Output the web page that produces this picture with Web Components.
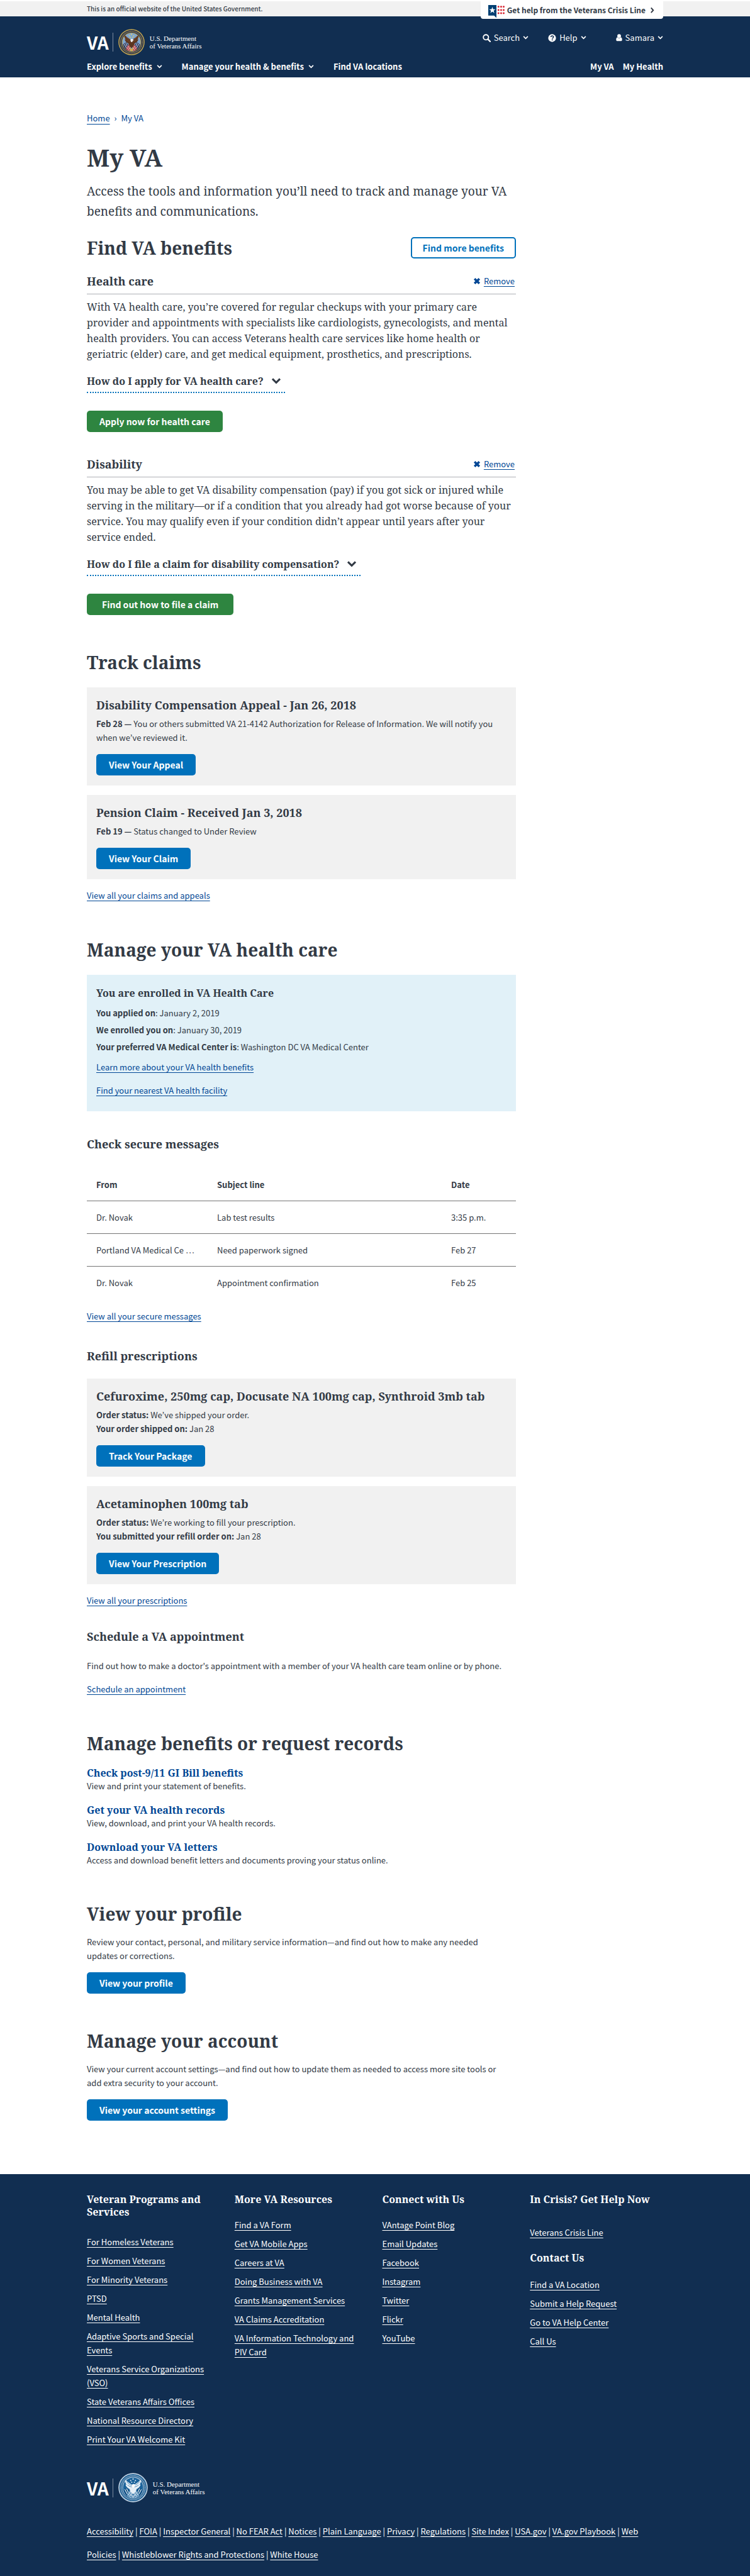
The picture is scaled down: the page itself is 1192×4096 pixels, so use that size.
<!DOCTYPE html>
<html lang="en">
<head>
<meta charset="utf-8">
<meta name="viewport" content="width=device-width, initial-scale=1">
<title>My VA</title>
<style>
  :root {
    --sans: "Noto Sans CJK JP", "Noto Sans", sans-serif;
    --serif: "Noto Serif", "DejaVu Serif Condensed", "DejaVu Serif", serif;
    --ink: #323a45;
    --link: #004795;
    --navy: #112e51;
    --blue: #0071bb;
    --green: #2e8540;
    --grey: #f1f1f1;
    --measure: 916px;
  }
  body {
    margin: 0;
    background: #fff;
    color: var(--ink);
    font: 400 13px/22px var(--sans);
  }
</style>
</head>
<body>
<my-va-page></my-va-page>

<script>
const define = (name, html, setup) => {
  const template = document.createElement('template');
  template.innerHTML = html;
  customElements.define(name, class extends HTMLElement {
    constructor() {
      super();
      this.attachShadow({ mode: 'open' }).append(template.content.cloneNode(true));
    }
    connectedCallback() {
      if (setup) setup(this, this.shadowRoot);
    }
  });
};

/* ---------- icons ---------- */
const ICONS = {
  chevron: ['0 0 12 10', '<path d="M1.500 2.500 6 7l4.500-4.500" fill="none" stroke="currentColor" stroke-width="2.300"/>'],
  caret: ['0 0 8 12', '<path d="M2 1.500 6 6 2 10.500" fill="none" stroke="currentColor" stroke-width="2.200"/>'],
  search: ['0 0 14 14', '<circle cx="5.700" cy="5.700" r="4.400" fill="none" stroke="currentColor" stroke-width="2"/><path d="m9 9 4 4" stroke="currentColor" stroke-width="2.400" stroke-linecap="round"/>'],
  help: ['0 0 14 14', '<circle cx="7" cy="7" r="6.600" fill="currentColor"/><path d="M4.900 5.300C5 3.900 6 3.300 7.100 3.300c1.200 0 2.200.7 2.200 1.900 0 1.500-2 1.600-2 3" fill="none" stroke="#112e51" stroke-width="1.700"/><path d="M6.300 9.300h1.900v1.700H6.300z" fill="#112e51"/>'],
  person: ['0 0 12 14', '<circle cx="6" cy="3.800" r="3.500" fill="currentColor"/><path d="M2.700 6.400C1 6.800.3 8.700.3 11c0 1.500 1 2.500 2.300 2.500h6.800c1.300 0 2.300-1 2.300-2.500 0-2.300-.7-4.200-2.400-4.600a4.700 4.700 0 0 1-6.600 0z" fill="currentColor"/>'],
  cross: ['0 0 12 12', '<path d="m2.200 2.200 7.600 7.600M9.800 2.200 2.200 9.800" stroke="currentColor" stroke-width="3.600"/>'],
  crisis: ['0 0 28 22', '<path d="M0 0h14v22l-4-4H0z" fill="#003f72"/><path d="m7 3.200 1.400 4h4.100L9.200 9.700l1.200 4L7 11.300l-3.400 2.400 1.200-4L1.500 7.200h4.100z" fill="#fff"/><g fill="#d8232f"><circle cx="17.500" cy="3" r="1.600"/><circle cx="22" cy="3" r="1.600"/><circle cx="26.400" cy="3" r="1.600"/><circle cx="17.500" cy="8.500" r="1.600"/><circle cx="22" cy="8.500" r="1.600"/><circle cx="26.400" cy="8.500" r="1.600"/><circle cx="17.500" cy="14" r="1.600"/><circle cx="22" cy="14" r="1.600"/><circle cx="26.400" cy="14" r="1.600"/></g>']
};
define('va-icon', `
  <style>
    :host { display: inline-flex; flex: none; width: var(--size, 12px); }
    svg { display: block; width: 100%; height: auto; }
  </style>
  <svg aria-hidden="true"></svg>`,
  (host, root) => {
    const [box, shapes] = ICONS[host.getAttribute('name')];
    const svg = root.querySelector('svg');
    svg.setAttribute('viewBox', box);
    svg.innerHTML = shapes;
  });

/* ---------- department seal ---------- */
const sealSvg = c => `
  <svg viewBox="0 0 100 100" role="img" aria-label="Department of Veterans Affairs seal">
    <circle cx="50" cy="50" r="49.500" fill="${c.rope}"/>
    <circle cx="50" cy="50" r="46" fill="${c.ring}"/>
    <circle cx="50" cy="50" r="40.500" fill="none" stroke="${c.letter}" stroke-width="5.500" stroke-dasharray="2.600 1.900" opacity=".75"/>
    <circle cx="50" cy="50" r="36" fill="${c.rope}"/>
    <circle cx="50" cy="50" r="34" fill="${c.sky}"/>
    <path d="M18 58 30 50l12 18-6 14C27 79 20 70 18 58z" fill="${c.canton}"/>
    <path d="M82 58 70 50 58 68l6 14c9-3 16-12 18-24z" fill="${c.canton}"/>
    <path d="m22 56 12 22M28 53l12 26M78 56 66 78M72 53 60 79" stroke="${c.white}" stroke-width="2.200"/>
    <path d="m30 72 10-14 6 12-2 13c-6 0-10-2-14-5zM70 72 60 58l-6 12 2 13c6 0 10-2 14-5z" fill="${c.stripe}"/>
    <path d="m33 76 9-14M38 80l7-12M67 76l-9-14M62 80l-7-12" stroke="${c.white}" stroke-width="2"/>
    <g fill="${c.star}"><circle cx="42" cy="26" r="2.200"/><circle cx="50" cy="21" r="2.400"/><circle cx="58" cy="26" r="2.200"/><circle cx="45.500" cy="32" r="2"/><circle cx="54.500" cy="32" r="2"/></g>
    <path d="M50 44c-5-6-10-7-16-12-4-3-8-7-11-8 0 8 2 12 5 16-2 0-3 0-4-1 2 8 8 13 14 16l4 10 8 8 8-8 4-10c6-3 12-8 14-16-1 1-2 1-4 1 3-4 5-8 5-16-3 1-7 5-11 8-6 5-11 6-16 12z" fill="${c.eagle}"/>
    <path d="M28 30c6 7 12 10 18 14M72 30c-6 7-12 10-18 14M31 41c5 4 9 5 14 7M69 41c-5 4-9 5-14 7" fill="none" stroke="${c.feather}" stroke-width="1.600"/>
    <path d="M46 42c0-5 8-6 10-2l3 3-4 1c0 3-2 5-4 6-3-1-5-4-5-8z" fill="${c.white}"/>
    <path d="m44 68 6 10 6-10 1 10-7 7-7-7z" fill="${c.gold}"/>
  </svg>`;
define('va-seal', `<style>:host { display: block; flex: none; width: var(--seal, 42px); } svg { display: block; width: 100%; height: auto; }</style><div></div>`,
  (host, root) => {
    root.querySelector('div').innerHTML = sealSvg(host.hasAttribute('mono')
      ? { rope:'#c3d4e4', ring:'#12568c', letter:'#c3d4e4', sky:'#1b639b', canton:'#0f4f84', white:'#fff', stripe:'#5d93bd', star:'#d6e4ef', eagle:'#e6eff6', feather:'#2a6ea3', gold:'#a9c5dc' }
      : { rope:'#c9a94e', ring:'#1c2b50', letter:'#c9a94e', sky:'#7fa6cf', canton:'#27375f', white:'#eef1f5', stripe:'#b5414b', star:'#e3cf67', eagle:'#5d3620', feather:'#8a5c35', gold:'#d9a93f' });
  });

define('va-logo', `
  <style>
    :host { display: flex; align-items: center; color: #fff; }
    a { display: flex; align-items: center; color: inherit; text-decoration: none; }
    .va { font: 700 28px/32px var(--sans); }
    .rule { width: 1px; height: 30px; margin: 0 8px 0 6px; background: #7d8ba0; }
    .name { margin-left: 8px; font: 400 11px/12px "Liberation Serif", serif; }
  </style>
  <a href="#"><span class="va">VA</span><span class="rule"></span><slot></slot><span class="name">U.S. Department<br>of Veterans Affairs</span></a>`);

/* ---------- basic controls ---------- */
define('va-link', `
  <style>
    :host { display: block; }
    a { color: var(--link); text-decoration: underline; text-underline-offset: 3px; text-decoration-skip-ink: none; }
  </style>
  <a href="#"><slot></slot></a>`);

define('va-button', `
  <style>
    :host { display: block; }
    button {
      display: block; height: 34px; padding: 0 var(--pad, 20px); margin: 0;
      border: 0; border-radius: 5px; background: var(--blue); color: #fff;
      font: 700 14px/20px var(--sans); cursor: pointer;
    }
    :host([kind="go"]) button { background: var(--green); }
    :host([kind="outline"]) button { background: #fff; color: var(--blue); border: 2px solid; padding: 0 17px; }
    :host([wide]) button { --pad: 24px; }
  </style>
  <button type="button"><slot></slot></button>`);

/* ---------- header ---------- */
define('va-banner', `
  <style>
    :host { display: block; padding-top: 2px; background: #fff; }
    .bar { background: var(--grey); }
    .in { display: flex; justify-content: space-between; align-items: flex-start; height: 24px; max-width: var(--measure); margin: 0 auto; }
    .note { font-size: 10px; line-height: 24px; font-weight: 500; }
    .crisis {
      position: relative; display: flex; align-items: center; gap: 4px; height: 28px; padding: 0 14px 0 12px;
      background: #fff; border-radius: 0 0 4px 4px; color: var(--ink);
      font-size: 12px; font-weight: 700; text-decoration: none;
    }
    .crisis va-icon:first-child { --size: 26px; padding-top: 4px; }
    .crisis va-icon:last-child { --size: 7px; margin-left: 3px; }
  </style>
  <div class="bar"><div class="in">
    <span class="note">This is an official website of the United States Government.</span>
    <a class="crisis" href="#"><va-icon name="crisis"></va-icon>Get help from the Veterans Crisis Line<va-icon name="caret"></va-icon></a>
  </div></div>`);

define('va-header', `
  <style>
    :host { display: block; background: var(--navy); color: #fff; }
    .in { max-width: var(--measure); margin: 0 auto; padding: 20px 0 7px; }
    .top, .nav, .tools, .side, .main { display: flex; }
    .top { justify-content: space-between; align-items: flex-start; height: 42px; }
    .tools { gap: 31px; padding-top: 4px; }
    .nav { justify-content: space-between; margin-top: 8px; }
    .main { gap: 31px; }
    .side { gap: 14px; }
    button, .nav a {
      display: flex; align-items: center; gap: 5px; padding: 0; border: 0; background: none; color: inherit;
      font: 400 13px/20px var(--sans); text-decoration: none; cursor: pointer;
    }
    button va-icon:last-child { --size: 9px; }
    .nav button, .nav a { gap: 7px; font-weight: 700; }
    .user { margin-left: 16px; }
    .glyph { --size: 13px; }
    .user .glyph { --size: 10px; }
  </style>
  <header class="in">
    <div class="top">
      <va-logo><va-seal></va-seal></va-logo>
      <div class="tools">
        <button type="button"><va-icon class="glyph" name="search"></va-icon>Search<va-icon name="chevron"></va-icon></button>
        <button type="button"><va-icon class="glyph" name="help"></va-icon>Help<va-icon name="chevron"></va-icon></button>
        <button type="button" class="user"><va-icon class="glyph" name="person"></va-icon>Samara<va-icon name="chevron"></va-icon></button>
      </div>
    </div>
    <nav class="nav">
      <div class="main">
        <button type="button">Explore benefits<va-icon name="chevron"></va-icon></button>
        <button type="button">Manage your health &amp; benefits<va-icon name="chevron"></va-icon></button>
        <a href="#">Find VA locations</a>
      </div>
      <div class="side"><a href="#">My VA</a><a href="#">My Health</a></div>
    </nav>
  </header>`);

define('va-breadcrumb', `
  <style>
    :host { display: flex; gap: 7px; color: var(--link); }
    a { color: inherit; text-underline-offset: 4px; }
  </style>
  <a href="#">Home</a><span aria-hidden="true">›</span><span>My VA</span>`);

/* ---------- content blocks ---------- */
define('va-section', `
  <style>
    :host { display: block; margin-top: 59px; }
    .head { display: flex; justify-content: space-between; align-items: center; }
    h2 { margin: 0; font: 700 28px/32px var(--serif); }
    .body { margin-top: var(--lead, 24px); }
  </style>
  <section>
    <div class="head"><h2></h2><slot name="action"></slot></div>
    <div class="body"><slot></slot></div>
  </section>`,
  (host, root) => { root.querySelector('h2').textContent = host.getAttribute('heading'); });

define('va-subsection', `
  <style>
    :host { display: block; margin-top: 40px; }
    h3 { margin: 0 0 var(--lead, 24px); font: 700 18px/24px var(--serif); }
  </style>
  <section><h3></h3><slot></slot></section>`,
  (host, root) => { root.querySelector('h3').textContent = host.getAttribute('heading'); });

define('va-benefit', `
  <style>
    :host { display: block; }
    .head { display: flex; justify-content: space-between; align-items: flex-end; padding-bottom: 8px; border-bottom: 1px solid #aeb0b5; }
    h3 { margin: 0; font: 700 18px/24px var(--serif); }
    .remove {
      display: flex; align-items: center; gap: 5px; padding: 0 2px 0 0; border: 0; background: none;
      color: var(--link); font: 400 13px/24px var(--sans); cursor: pointer;
    }
    .remove span { text-decoration: underline; text-underline-offset: 3px; }
    p { margin: 8px 0 18px; font: 400 16px/25px var(--serif); }
    .more {
      display: flex; width: fit-content; align-items: center; padding: 0 6px 5px 0;
      border: 0; border-bottom: 2px dotted var(--blue); background: none; color: inherit; gap: 12px;
      font: 700 16px/24px var(--serif); cursor: pointer;
    }
    .more va-icon { --size: 16px; }
    .act { margin-top: 28px; }
  </style>
  <article>
    <div class="head"><h3></h3><button class="remove" type="button"><va-icon name="cross"></va-icon><span>Remove</span></button></div>
    <p><slot></slot></p>
    <button class="more" type="button" aria-expanded="false"><slot name="question"></slot><va-icon name="chevron"></va-icon></button>
    <div class="act"><slot name="action"></slot></div>
  </article>`,
  (host, root) => { root.querySelector('h3').textContent = host.getAttribute('heading'); });

define('va-card', `
  <style>
    :host { display: block; background: var(--grey); padding: 16px 15px; }
    h3 { margin: 0; font: 700 18px/24px var(--serif); }
    .text { margin: 7px 0 15px; }
  </style>
  <article><h3></h3><div class="text"><slot></slot></div><slot name="action"></slot></article>`,
  (host, root) => { root.querySelector('h3').textContent = host.getAttribute('heading'); });

define('va-enrollment', `
  <style>
    :host { display: block; background: #e1f1f8; padding: 17px 15px 22px; }
    h3 { margin: 0 0 9px; font: 700 16px/24px var(--serif); }
    dl { display: flex; flex-direction: column; gap: 5px; margin: 0 0 10px; }
    dl div { display: flex; }
    dt { font-weight: 700; }
    dd { margin: 0; white-space: pre; }
    .links { display: flex; flex-direction: column; gap: 15px; }
  </style>
  <h3>You are enrolled in VA Health Care</h3>
  <dl>
    <div><dt>You applied on</dt><dd>: January 2, 2019</dd></div>
    <div><dt>We enrolled you on</dt><dd>: January 30, 2019</dd></div>
    <div><dt>Your preferred VA Medical Center is</dt><dd>: Washington DC VA Medical Center</dd></div>
  </dl>
  <div class="links">
    <va-link>Learn more about your VA health benefits</va-link>
    <va-link>Find your nearest VA health facility</va-link>
  </div>`);

define('va-messages', `
  <style>
    :host { display: block; }
    table { width: 100%; border-collapse: collapse; table-layout: fixed; }
    th, td { height: 51px; padding: 0 15px; text-align: left; border-bottom: 1px solid #757575; }
    tbody tr:last-child td { border-bottom-color: transparent; }
    th { font-weight: 700; }
    td { white-space: nowrap; }
    th:nth-child(1) { width: 162px; }
    th:nth-child(3) { width: 88px; }
  </style>
  <table>
    <thead><tr><th scope="col">From</th><th scope="col">Subject line</th><th scope="col">Date</th></tr></thead>
    <tbody>
      <tr><td>Dr. Novak</td><td>Lab test results</td><td>3:35 p.m.</td></tr>
      <tr><td>Portland VA Medical Ce …</td><td>Need paperwork signed</td><td>Feb 27</td></tr>
      <tr><td>Dr. Novak</td><td>Appointment confirmation</td><td>Feb 25</td></tr>
    </tbody>
  </table>`);

define('va-record-link', `
  <style>
    :host { display: block; }
    a { display: block; color: var(--link); font: 700 16px/22px var(--serif); text-decoration: none; }
    p { margin: 0; line-height: 20px; }
  </style>
  <a href="#"></a><p><slot></slot></p>`,
  (host, root) => { root.querySelector('a').textContent = host.getAttribute('heading'); });

/* ---------- footer ---------- */
define('va-footer-list', `
  <style>
    :host { display: block; }
    h3 { margin: 0 0 var(--lead); font: 700 16px/20px var(--serif); }
    ul { display: flex; flex-direction: column; gap: 8px; margin: 0; padding: 0; list-style: none; }
    a { color: inherit; text-underline-offset: 3px; text-decoration-skip-ink: none; }
  </style>
  <h3></h3><ul></ul>`,
  (host, root) => {
    root.querySelector('h3').textContent = host.getAttribute('heading');
    const list = root.querySelector('ul');
    for (const text of host.getAttribute('items').split('|')) {
      const li = document.createElement('li');
      const a = document.createElement('a');
      a.href = '#';
      a.textContent = text;
      li.append(a);
      list.append(li);
    }
  });

define('va-footer', `
  <style>
    :host { display: block; background: var(--navy); color: #fff; }
    footer { max-width: var(--measure); margin: 0 auto; padding: 30px 0 16px; }
    .cols { display: grid; grid-template-columns: repeat(4, 1fr); gap: 23px; }
    .cols > * { --lead: 20px; }
    .cols > :first-child { --lead: 27px; }
    .help { display: flex; flex-direction: column; gap: 19px; }
    .help > :first-child { --lead: 32px; }
    .help > :last-child { --lead: 22px; }
    va-logo { margin-top: 42px; }
    va-seal { --seal: 47px; }
    .legal { margin: 27px 0 0; line-height: 37px; }
    .legal a { color: inherit; text-underline-offset: 3px; text-decoration-skip-ink: none; }
  </style>
  <footer>
    <div class="cols">
      <va-footer-list heading="Veteran Programs and Services" items="For Homeless Veterans|For Women Veterans|For Minority Veterans|PTSD|Mental Health|Adaptive Sports and Special Events|Veterans Service Organizations (VSO)|State Veterans Affairs Offices|National Resource Directory|Print Your VA Welcome Kit"></va-footer-list>
      <va-footer-list heading="More VA Resources" items="Find a VA Form|Get VA Mobile Apps|Careers at VA|Doing Business with VA|Grants Management Services|VA Claims Accreditation|VA Information Technology and PIV Card"></va-footer-list>
      <va-footer-list heading="Connect with Us" items="VAntage Point Blog|Email Updates|Facebook|Instagram|Twitter|Flickr|YouTube"></va-footer-list>
      <div class="help">
        <va-footer-list heading="In Crisis? Get Help Now" items="Veterans Crisis Line"></va-footer-list>
        <va-footer-list heading="Contact Us" items="Find a VA Location|Submit a Help Request|Go to VA Help Center|Call Us"></va-footer-list>
      </div>
    </div>
    <va-logo><va-seal mono></va-seal></va-logo>
    <p class="legal"><a href="#">Accessibility</a> | <a href="#">FOIA</a> | <a href="#">Inspector General</a> | <a href="#">No FEAR Act</a> | <a href="#">Notices</a> | <a href="#">Plain Language</a> | <a href="#">Privacy</a> | <a href="#">Regulations</a> | <a href="#">Site Index</a> | <a href="#">USA.gov</a> | <a href="#">VA.gov Playbook</a> | <a href="#">Web Policies</a> | <a href="#">Whistleblower Rights and Protections</a> | <a href="#">White House</a></p>
  </footer>`);

/* ---------- page ---------- */
define('my-va-page', `
  <style>
    :host { display: block; }
    .wrap { max-width: var(--measure); margin: 0 auto; padding: 54px 0 85px; }
    main { max-width: 682px; }
    h1 { margin: 31px 0 18px; font: 700 38px/40px var(--serif); }
    .intro { margin: 0 0 25px; font: 400 19px/32px var(--serif); }
    p { margin: 0; }
    .stack > p { max-width: 668px; }
    .first { margin-top: 0; }
    .list { --lead: 20px; }
    .text { --lead: 18px; }
    .benefits { display: flex; flex-direction: column; gap: 39px; }
    .stack { display: flex; flex-direction: column; gap: 15px; }
    .messages { --lead: 27px; }
    .messages va-link { margin-top: 16px; }
    .visit { margin-top: 34px; }
    .records { display: flex; flex-direction: column; gap: 17px; }
  </style>
  <va-banner></va-banner>
  <va-header></va-header>
  <div class="wrap">
    <va-breadcrumb></va-breadcrumb>
    <main>
      <h1>My VA</h1>
      <p class="intro">Access the tools and information you’ll need to track and manage your VA benefits and communications.</p>
      <va-section class="first" heading="Find VA benefits">
        <va-button slot="action" kind="outline">Find more benefits</va-button>
        <div class="benefits">
          <va-benefit heading="Health care">With VA health care, you’re covered for regular checkups with your primary care provider and appointments with specialists like cardiologists, gynecologists, and mental health providers. You can access Veterans health care services like home health or geriatric (elder) care, and get medical equipment, prosthetics, and prescriptions.
            <span slot="question">How do I apply for VA health care?</span>
            <va-button slot="action" kind="go">Apply now for health care</va-button>
          </va-benefit>
          <va-benefit heading="Disability">You may be able to get VA disability compensation (pay) if you got sick or injured while serving in the military—or if a condition that you already had got worse because of your service. You may qualify even if your condition didn’t appear until years after your service ended.
            <span slot="question">How do I file a claim for disability compensation?</span>
            <va-button slot="action" kind="go" wide>Find out how to file a claim</va-button>
          </va-benefit>
        </div>
      </va-section>

      <va-section heading="Track claims">
        <div class="stack">
          <va-card heading="Disability Compensation Appeal - Jan 26, 2018">
            <b>Feb 28 —</b> You or others submitted VA 21-4142 Authorization for Release of Information. We will notify you when we’ve reviewed it.
            <va-button slot="action">View Your Appeal</va-button>
          </va-card>
          <va-card heading="Pension Claim - Received Jan 3, 2018">
            <b>Feb 19 —</b> Status changed to Under Review
            <va-button slot="action">View Your Claim</va-button>
          </va-card>
          <va-link>View all your claims and appeals</va-link>
        </div>
      </va-section>

      <va-section heading="Manage your VA health care">
        <va-enrollment></va-enrollment>
        <va-subsection class="messages" heading="Check secure messages">
          <va-messages></va-messages>
          <va-link>View all your secure messages</va-link>
        </va-subsection>
        <va-subsection heading="Refill prescriptions">
          <div class="stack">
            <va-card heading="Cefuroxime, 250mg cap, Docusate NA 100mg cap, Synthroid 3mb tab">
              <p><b>Order status:</b> We’ve shipped your order.</p>
              <p><b>Your order shipped on:</b> Jan 28</p>
              <va-button slot="action">Track Your Package</va-button>
            </va-card>
            <va-card heading="Acetaminophen 100mg tab">
              <p><b>Order status:</b> We’re working to fill your prescription.</p>
              <p><b>You submitted your refill order on:</b> Jan 28</p>
              <va-button slot="action">View Your Prescription</va-button>
            </va-card>
            <va-link>View all your prescriptions</va-link>
          </div>
        </va-subsection>
        <va-subsection class="visit" heading="Schedule a VA appointment">
          <div class="stack">
            <p>Find out how to make a doctor's appointment with a member of your VA health care team online or by phone.</p>
            <va-link>Schedule an appointment</va-link>
          </div>
        </va-subsection>
      </va-section>

      <va-section class="list" heading="Manage benefits or request records">
        <div class="records">
          <va-record-link heading="Check post-9/11 GI Bill benefits">View and print your statement of benefits.</va-record-link>
          <va-record-link heading="Get your VA health records">View, download, and print your VA health records.</va-record-link>
          <va-record-link heading="Download your VA letters">Access and download benefit letters and documents proving your status online.</va-record-link>
        </div>
      </va-section>

      <va-section class="text" heading="View your profile">
        <div class="stack">
          <p>Review your contact, personal, and military service information—and find out how to make any needed updates or corrections.</p>
          <va-button>View your profile</va-button>
        </div>
      </va-section>

      <va-section class="text" heading="Manage your account">
        <div class="stack">
          <p>View your current account settings—and find out how to update them as needed to access more site tools or add extra security to your account.</p>
          <va-button>View your account settings</va-button>
        </div>
      </va-section>
    </main>
  </div>
  <va-footer></va-footer>`);
</script>
</body>
</html>
